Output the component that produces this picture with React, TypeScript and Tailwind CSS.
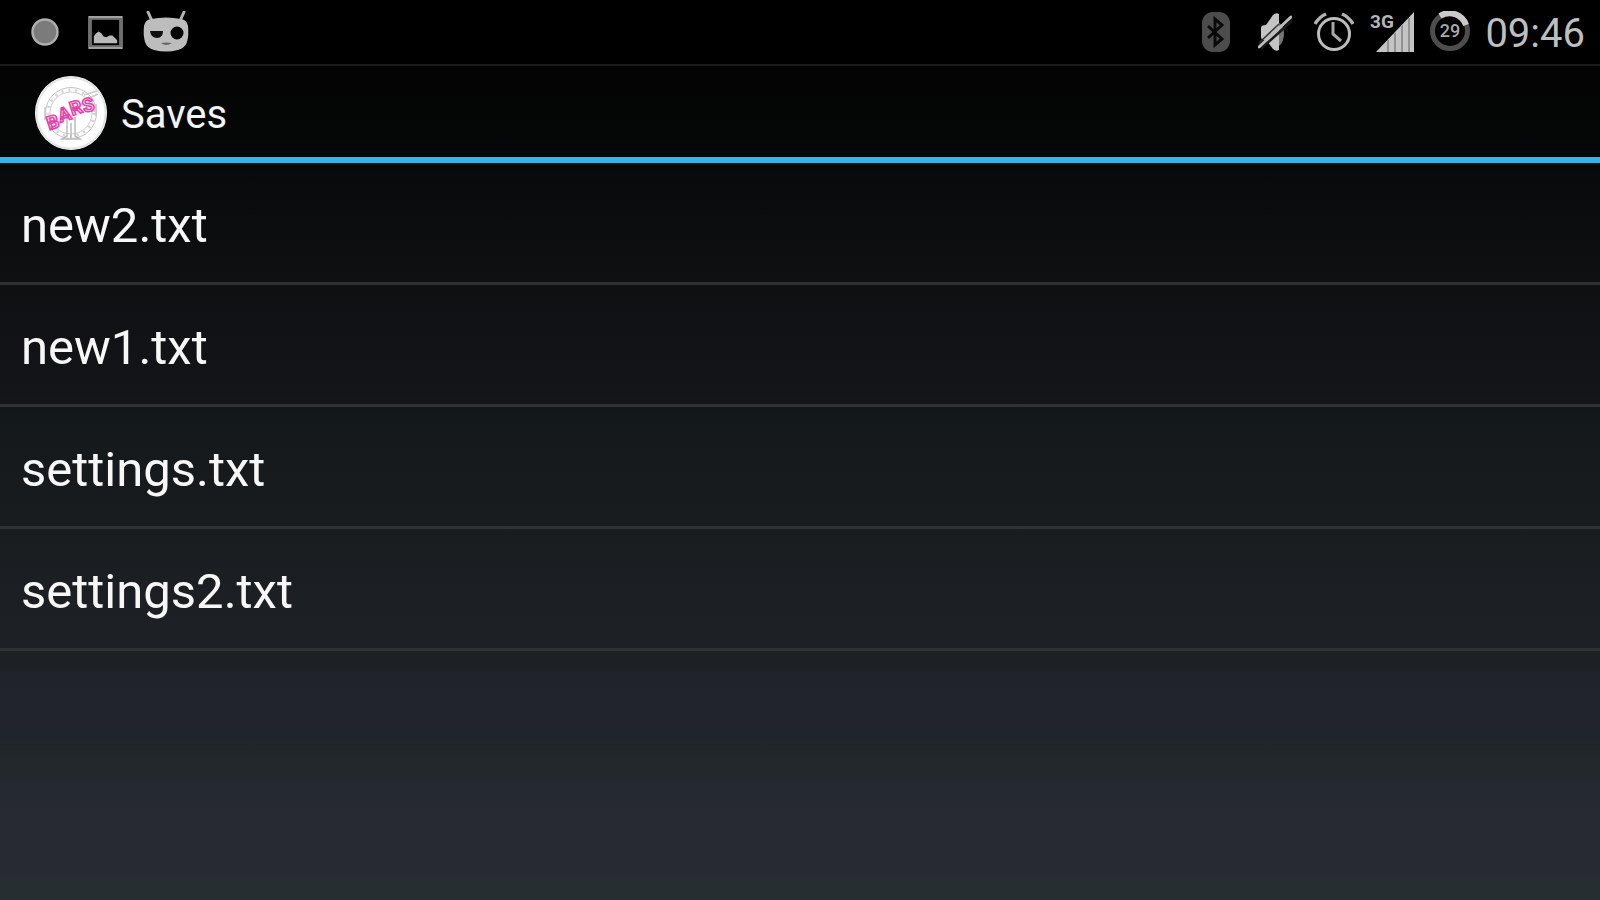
import React from "react";

const files = ["new2.txt", "new1.txt", "settings.txt", "settings2.txt"];

const RecordIcon = () => (
  <svg width="30" height="30" viewBox="0 0 30 30" aria-hidden="true">
    <circle cx="15" cy="15" r="12.5" fill="#7b7b7b" stroke="#adadad" strokeWidth="2.5" />
  </svg>
);

const PictureIcon = () => (
  <svg width="35" height="33" viewBox="0 0 36 34" aria-hidden="true">
    <rect x="2" y="2" width="32" height="30" fill="none" stroke="#6f6f6f" strokeWidth="4" />
    <path d="M1 1H35M1 33H35" stroke="#a0a0a0" strokeWidth="2" />
    <path d="M6 28V21L8 18L11 16L14 18L16 21L19 22L22 20L25 20L28 23L30 25V28Z" fill="#b9b9b9" />
  </svg>
);

const CyanogenIcon = () => (
  <svg width="46" height="42" viewBox="0 0 46 42" aria-hidden="true">
    <path d="M5 1L9 10M41 1L37 10" stroke="#b4b4b4" strokeWidth="3" strokeLinecap="round" />
    <path
      d="M8 8Q23 5 38 8Q44 9 45 15Q46 24 44 31Q42 37 35 39Q23 42 11 39Q4 37 2 31Q0 24 1 15Q2 9 8 8Z"
      fill="#bdbdbd"
    />
    <path d="M7 20H20Q20 27 14 27Q8 27 7 20Z" fill="#101010" />
    <circle cx="34" cy="22" r="6.5" fill="#050505" />
    <path d="M18 32Q23 31 29 32Q23 36 18 32Z" fill="#666" />
  </svg>
);

const BluetoothIcon = () => (
  <svg width="28" height="42" viewBox="0 0 28 42" aria-hidden="true">
    <rect x="0" y="1" width="28" height="40" rx="11" fill="#4c4c4c" />
    <path d="M6 15L20 28L13 34V8L20 14L6 27" fill="none" stroke="#0a0a0a" strokeWidth="3" />
  </svg>
);

const MutedIcon = () => (
  <svg width="34" height="40" viewBox="0 0 34 40" aria-hidden="true">
    <path d="M3 16Q3 13 8 13L15 3Q18 0 21 2V38Q18 40 15 37L9 29Q3 28 3 25Z" fill="#c4c4c4" />
    <path d="M21 11Q26 14 26 21Q26 30 21 34Z" fill="#747474" />
    <path d="M3 36.500L34 9" stroke="#1a1a1a" strokeWidth="2.500" />
    <path d="M1 35L33 5" stroke="#bcbcbc" strokeWidth="3" strokeLinecap="round" />
    <path d="M1 31L21 12" stroke="#333" strokeWidth="1.500" />
  </svg>
);

const AlarmIcon = () => (
  <svg width="40" height="40" viewBox="0 0 40 40" fill="none" aria-hidden="true">
    <circle cx="20" cy="22" r="15.5" stroke="#bdbdbd" strokeWidth="3" />
    <path d="M1 12Q5 5 12 2M39 12Q35 5 28 2" stroke="#b2b2b2" strokeWidth="3.5" />
    <path d="M19 10V22L27 29" stroke="#a8a8a8" strokeWidth="3" />
  </svg>
);

const SignalIcon = () => (
  <svg width="45" height="42" viewBox="0 0 45 42" aria-label="3G signal">
    <text x="0" y="17" fill="#b5b5b5" fontFamily="Roboto, sans-serif" fontSize="19" fontWeight="700">
      3G
    </text>
    <path d="M6 41L44 1V41Z" fill="#c4c4c4" />
    <path d="M18 29V41M25 22V41M32 14V41M39 7V41" stroke="#929292" strokeWidth="2" />
  </svg>
);

const BatteryIcon = () => (
  <svg width="42" height="42" viewBox="0 0 42 42" aria-label="Battery 29%">
    <circle cx="21" cy="20" r="17.5" fill="none" stroke="#4d4d4d" strokeWidth="5" />
    <path d="M11 5A17.500 17.500 0 0 1 37 14" fill="none" stroke="#cbcbcb" strokeWidth="6" />
    <text
      x="21"
      y="26"
      textAnchor="middle"
      fill="#a9a9a9"
      fontFamily="Roboto, sans-serif"
      fontSize="18"
      fontWeight="500"
    >
      29
    </text>
  </svg>
);

const AppLogo = () => (
  <svg width="72" height="76" viewBox="0 0 72 76" aria-label="BARS">
    <ellipse cx="36" cy="38" rx="36" ry="37" fill="#fff" />
    <ellipse cx="36" cy="38" rx="34.500" ry="35.500" fill="none" stroke="#e4e4e4" strokeWidth="2" />
    <circle cx="36" cy="38" r="25.500" fill="none" stroke="#c3c3c3" strokeWidth="1" />
    <circle cx="36" cy="38" r="21" fill="none" stroke="#cdcdcd" strokeWidth="1" />
    <circle cx="36" cy="38" r="23" fill="none" stroke="#d4d4d4" strokeWidth="3" strokeDasharray="2 5" />
    <path d="M32 42V61L27 64H45L40 61V42M36 48V63" fill="none" stroke="#bcbcbc" strokeWidth="1.500" />
    <path d="M49 20L62 16M52 24L63 19M10 32V45M61 29V41" stroke="#c8c8c8" strokeWidth="1.500" />
    <g
      transform="rotate(-17 36 38)"
      fill="#fbd3ec"
      stroke="#e83fae"
      strokeWidth="1.500"
      fontFamily="Roboto, sans-serif"
      fontSize="19"
      fontWeight="700"
    >
      <text x="10" y="48">B</text>
      <text x="23" y="44">A</text>
      <text x="36" y="41">R</text>
      <text x="49" y="42">S</text>
    </g>
  </svg>
);

const StatusBar = () => (
  <div className="flex h-16 items-center justify-between bg-black pr-[15px] pl-[30px]">
    <div className="flex items-center gap-7">
      <RecordIcon />
      <PictureIcon />
      <div className="-ml-2">
        <CyanogenIcon />
      </div>
    </div>
    <div className="flex items-center gap-3.5">
      <div className="flex items-center gap-7">
        <BluetoothIcon />
        <MutedIcon />
      </div>
      <div className="flex items-center gap-4 pl-2">
        <AlarmIcon />
        <SignalIcon />
      </div>
      <div className="flex items-center gap-3.5">
        <BatteryIcon />
        <time className="pt-1 text-[40px] leading-none text-[#bebebe]">09:46</time>
      </div>
    </div>
  </div>
);

const ActionBar = () => (
  <header className="flex h-[99px] items-center gap-3.5 border-t-2 border-b-6 border-t-[#1b1b1b] border-b-[#33b5e5] pt-0.5 pl-[35px]">
    <AppLogo />
    <h1 className="pt-1 text-[40px] leading-none text-[#f3f3f3]">Saves</h1>
  </header>
);

const App = () => {
  return (
    <div className="min-h-screen bg-[linear-gradient(to_bottom,#000_0%,#050606_15%,#090a0c_20%,#0f1012_32%,#141519_44%,#13181b_46%,#191c1f_58%,#1d2125_71%,#1e2123_74%,#20232b_75%,#20242c_82%,#20272a_83%,#23282b_86%,#252931_87%,#272a33_97%,#272e31_98%,#272e31_100%)] font-[Roboto,sans-serif]">
      <StatusBar />
      <ActionBar />
      <main>
        <ul>
          {files.map((file) => (
            <li key={file} className="border-b-3 border-[#2f3235]">
              <button className="flex h-[119px] w-full items-center px-[21px] pt-1.5 text-left text-[49px] leading-none text-[#f7f7f7]">
                {file}
              </button>
            </li>
          ))}
        </ul>
      </main>
    </div>
  );
};

export default App;
